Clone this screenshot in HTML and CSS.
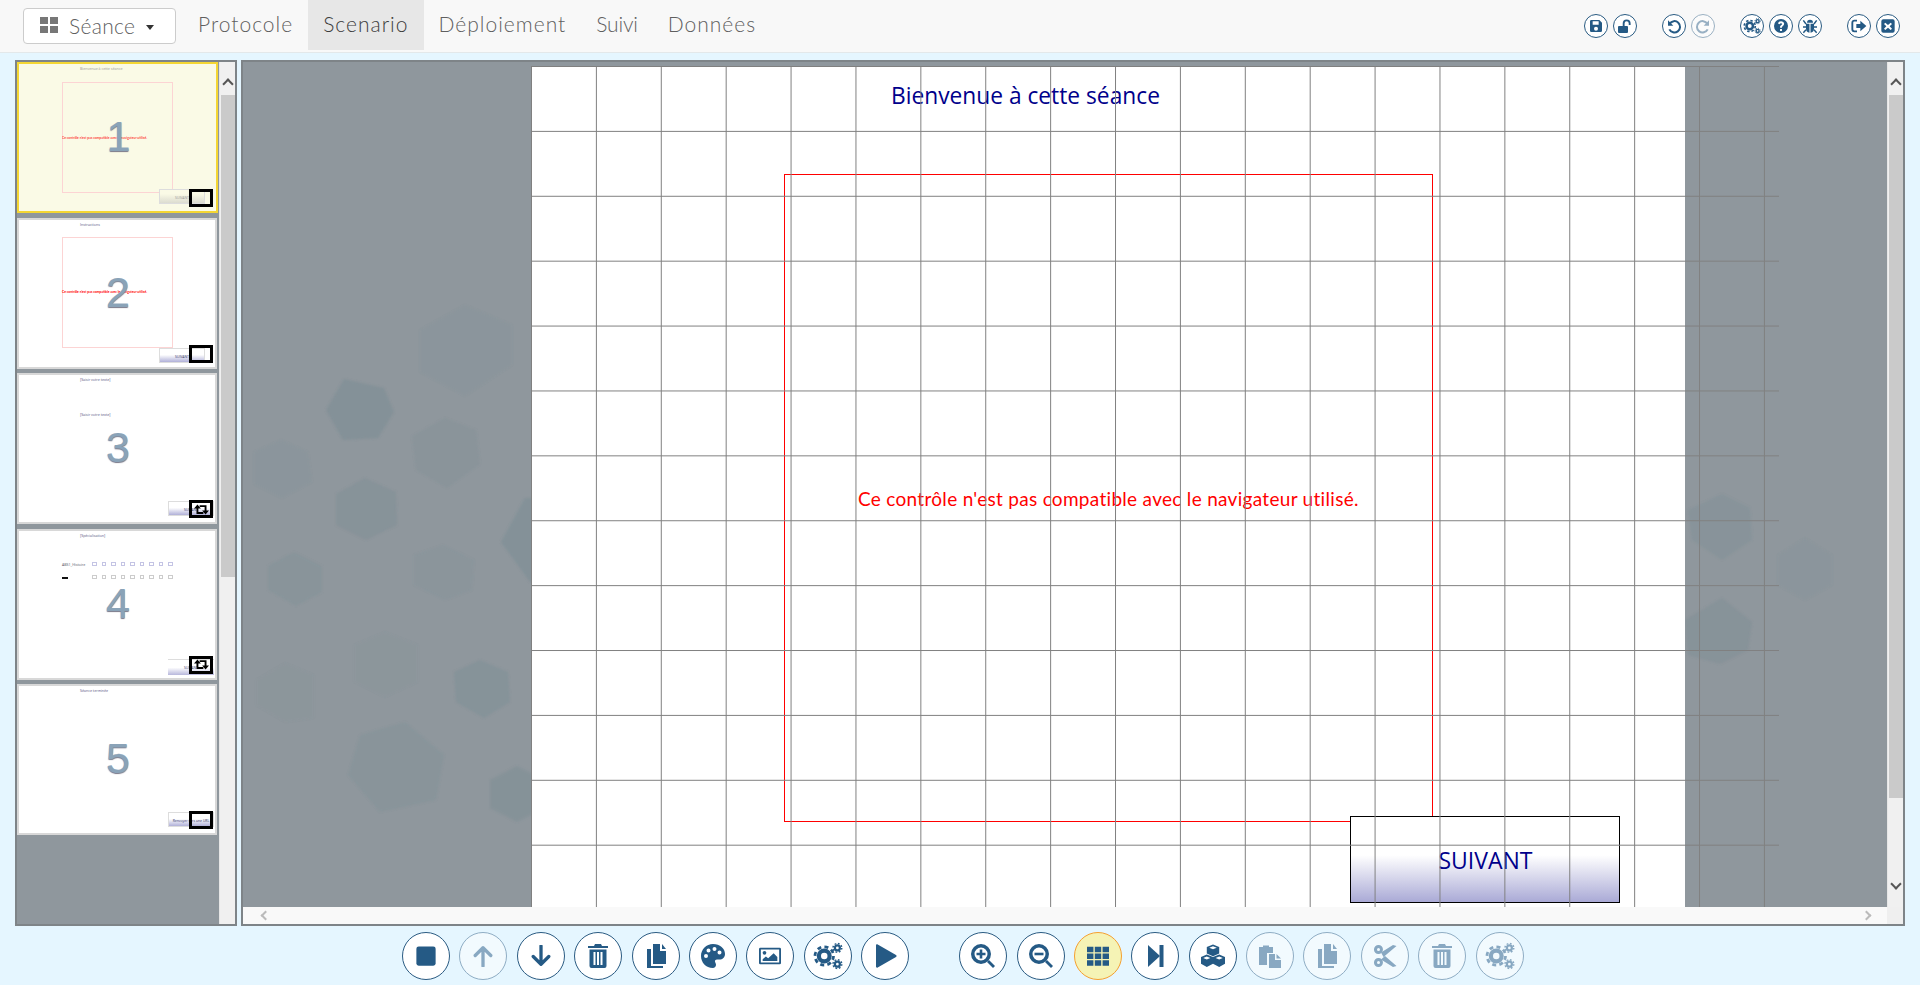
FILE: index.html
```html
<!DOCTYPE html>
<html lang="fr">
<head>
<meta charset="utf-8">
<title>Séance</title>
<link rel="stylesheet" href="styles.css">
</head>
<body>
<svg class="defs" width="0" height="0" aria-hidden="true">
  <defs>
    <symbol id="i-save" viewBox="0 0 24 24"><path d="M5 3h12l4 4v12a2 2 0 0 1-2 2H5a2 2 0 0 1-2-2V5a2 2 0 0 1 2-2zm2 2v5h9V5H7zm5 8a3 3 0 1 0 0 6 3 3 0 0 0 0-6z" fill-rule="evenodd"/></symbol>
    <symbol id="i-unlock" viewBox="0 0 24 24"><path d="M3 12h12a1.500 1.500 0 0 1 1.500 1.500V21a1.500 1.500 0 0 1-1.500 1.500H3A1.500 1.500 0 0 1 1.500 21v-7.500A1.500 1.500 0 0 1 3 12z"/><path d="M10 12V8a4.500 4.500 0 0 1 9 0v2.500" fill="none" stroke="currentColor" stroke-width="2.800"/></symbol>
    <symbol id="i-undo" viewBox="0 0 24 24"><path d="M5.500 8.500A8.500 8.500 0 1 1 5 17" fill="none" stroke="currentColor" stroke-width="3"/><path d="M3 3.500v8h8z"/></symbol>
    <symbol id="i-redo" viewBox="0 0 24 24"><path d="M18.500 8.500A8.500 8.500 0 1 0 19 17" fill="none" stroke="currentColor" stroke-width="3"/><path d="M21 3.500v8h-8z"/></symbol>
    <symbol id="i-cogs" viewBox="0 0 24 24"><circle cx="9" cy="12" r="4.300" fill="none" stroke="currentColor" stroke-width="3.400"/><circle cx="9" cy="12" r="7.400" fill="none" stroke="currentColor" stroke-width="2.200" stroke-dasharray="3.200 2.600"/><circle cx="19.500" cy="5.500" r="2" fill="none" stroke="currentColor" stroke-width="1.800"/><circle cx="19.500" cy="5.500" r="3.500" fill="none" stroke="currentColor" stroke-width="1.200" stroke-dasharray="1.400 1.350"/><circle cx="19.500" cy="18.500" r="2" fill="none" stroke="currentColor" stroke-width="1.800"/><circle cx="19.500" cy="18.500" r="3.500" fill="none" stroke="currentColor" stroke-width="1.200" stroke-dasharray="1.400 1.350"/></symbol>
    <symbol id="i-help" viewBox="0 0 24 24"><path fill-rule="evenodd" d="M12 1.500a10.500 10.500 0 1 1 0 21 10.500 10.500 0 0 1 0-21zM10.500 16.500v3h3v-3zM12 5C9.500 5 8 6.300 7.500 8.300l2.500 1c.3-1 1-1.600 2-1.600s1.600.5 1.600 1.200c0 1.500-3.100 1.900-3.100 4.600v1h3v-.6c0-1.700 3.200-2.200 3.200-5.200C16.700 6.500 14.500 5 12 5z"/></symbol>
    <symbol id="i-bug" viewBox="0 0 24 24"><path d="M7.500 7a4.500 4.500 0 0 1 9 0z"/><path d="M6 8.500h5.200V22C8 21.500 6 19 6 16zM12.800 8.500H18V16c0 3-2 5.500-5.200 6z"/><path d="M2 3.500l4 5.500M22 3.500l-4 5.500M1.500 13.500H6M22.500 13.500H18M2 22l4-4.500M22 22l-4-4.500" fill="none" stroke="currentColor" stroke-width="2.200"/></symbol>
    <symbol id="i-exit" viewBox="0 0 24 24"><path d="M9 4H5a3 3 0 0 0-3 3v10a3 3 0 0 0 3 3h4" fill="none" stroke="currentColor" stroke-width="2.800"/><path d="M8 9h6V4l9 8-9 8v-5H8z"/></symbol>
    <symbol id="i-close" viewBox="0 0 24 24"><path fill-rule="evenodd" d="M5 2h14a3 3 0 0 1 3 3v14a3 3 0 0 1-3 3H5a3 3 0 0 1-3-3V5a3 3 0 0 1 3-3zm3 5L6 9l3.500 3.500L6 16l2 2 4-3.500 4 3.500 2-2-3.500-3.500L18 9l-2-2-4 3.500z"/></symbol>
    <symbol id="i-stop" viewBox="0 0 24 24"><rect x="1.500" y="1.500" width="21" height="21" rx="2.500"/></symbol>
    <symbol id="i-up" viewBox="0 0 24 24"><path d="M12 23V3M3.500 11.500L12 3l8.500 8.500" fill="none" stroke="currentColor" stroke-width="3.600" stroke-linejoin="round" stroke-linecap="round"/></symbol>
    <symbol id="i-down" viewBox="0 0 24 24"><path d="M12 1v20M3.500 12.500L12 21l8.500-8.500" fill="none" stroke="currentColor" stroke-width="3.600" stroke-linejoin="round" stroke-linecap="round"/></symbol>
    <symbol id="i-trash" viewBox="0 0 24 24"><path d="M9 0h6l1 2h6v2H2V2h6zM3.500 5.500h17V22a2 2 0 0 1-2 2h-13a2 2 0 0 1-2-2zM7.500 8v13h2V8zm3.500 0v13h2V8zm3.500 0v13h2V8z" fill-rule="evenodd"/></symbol>
    <symbol id="i-copy" viewBox="0 0 24 24"><path d="M9 0h7v7h6v13H9z"/><path d="M18 0l4 5h-4z"/><path d="M7 5v17h12v2H3V5z"/></symbol>
    <symbol id="i-palette" viewBox="0 0 24 24"><path fill-rule="evenodd" d="M12 0c7 0 12 4.500 12 10 0 3.500-2.500 5.500-5.500 5.500H16c-1.500 0-2.300 1-2 2.200.4 1.200 1 1.800 1 3.100 0 2-1.300 3.200-3.200 3.200C5 24 0 18.500 0 12S5.300 0 12 0zM5 10a2 2 0 1 0 0 4 2 2 0 0 0 0-4zm2.500-5.500a2 2 0 1 0 0 4 2 2 0 0 0 0-4zm6-1.500a2 2 0 1 0 0 4 2 2 0 0 0 0-4zm5 3.500a2 2 0 1 0 0 4 2 2 0 0 0 0-4z"/></symbol>
    <symbol id="i-image" viewBox="0 0 24 24"><path fill-rule="evenodd" d="M1.500 3h21A1.500 1.500 0 0 1 24 4.500v15a1.500 1.500 0 0 1-1.500 1.500h-21A1.500 1.500 0 0 1 0 19.500v-15A1.500 1.500 0 0 1 1.500 3zM2 5v14h20V5z"/><circle cx="6" cy="8.500" r="2"/><path d="M4 17.500v-2l3.500-3 2.500 2 6-5.500 4 4v4.500z"/></symbol>
    <symbol id="i-play" viewBox="0 0 24 24"><path d="M3 1.500c0-1 .8-1.500 1.700-1L23 11c.8.500.8 1.500 0 2L4.700 23.500c-.9.500-1.700 0-1.700-1z"/></symbol>
    <symbol id="i-zoomin" viewBox="0 0 24 24"><path fill-rule="evenodd" d="M10 0a10 10 0 1 1 0 20 10 10 0 0 1 0-20zm0 3.500a6.500 6.500 0 1 0 0 13 6.500 6.500 0 0 0 0-13z"/><path d="M8.700 5.500h2.600v3.200h3.200v2.600h-3.200v3.200H8.700v-3.200H5.500V8.700h3.200z"/><path d="M16 18l2-2 6 6-2 2z"/></symbol>
    <symbol id="i-zoomout" viewBox="0 0 24 24"><path fill-rule="evenodd" d="M10 0a10 10 0 1 1 0 20 10 10 0 0 1 0-20zm0 3.500a6.500 6.500 0 1 0 0 13 6.500 6.500 0 0 0 0-13z"/><path d="M5.500 8.700h9v2.600h-9z"/><path d="M16 18l2-2 6 6-2 2z"/></symbol>
    <symbol id="i-grid" viewBox="0 0 24 24"><path d="M0 2h7v6H0zM8.500 2h7v6h-7zM17 2h7v6h-7zM0 9.300h7v6H0zM8.500 9.300h7v6h-7zM17 9.300h7v6h-7zM0 16.600h7v6H0zM8.500 16.600h7v6h-7zM17 16.600h7v6h-7z"/></symbol>
    <symbol id="i-step" viewBox="0 0 24 24"><path d="M5 1l12 11L5 23z"/><rect x="16.500" y="1" width="4" height="22"/></symbol>
    <symbol id="i-cubes" viewBox="0 0 24 24"><path d="M12 .5l6.200 2.500v6.600L12 12.200 5.800 9.600V3z"/><path d="M5.800 10.500l6.200 2.500v6.800L5.800 23 0 19.800V13zM18.200 10.500L24 13v6.800L18.200 23 12 19.800V13z"/><path d="M12 2.300l3.800 1.500L12 5.300 8.200 3.800zM5.800 12.600l3.600 1.400-3.600 1.500L2.200 14zM18.200 12.600l3.600 1.400-3.600 1.500-3.600-1.500z" fill="#fff"/></symbol>
    <symbol id="i-paste" viewBox="0 0 24 24"><path d="M1 3h4V1.500h6V3h4v6H9v12H1z"/><path d="M11 10h6v6h6v8H11z"/><path d="M18.500 10l4.500 4.500h-4.500z"/></symbol>
    <symbol id="i-cut" viewBox="0 0 24 24"><path fill-rule="evenodd" d="M5.500 1a4.500 4.500 0 1 1-.1 9 4.500 4.500 0 0 1 .1-9zm0 3a1.500 1.500 0 1 0 0 3 1.500 1.500 0 0 0 0-3zM5.500 14a4.500 4.500 0 1 1-.1 9 4.500 4.500 0 0 1 .1-9zm0 3a1.500 1.500 0 1 0 0 3 1.500 1.500 0 0 0 0-3z"/><path d="M8 8.500L20 1l3.500 1L10.500 13zM8 15.500l4-3.500 11.500 10-3.500 1z"/></symbol>
    <symbol id="i-retweet" viewBox="0 0 24 16"><path d="M5.500 4v9.500H15M18.500 12V2.500H9" fill="none" stroke="currentColor" stroke-width="3"/><path d="M0 6.500L5.500 0 11 6.500zM13 9.500h11L18.500 16z"/></symbol>
  </defs>
</svg>

<header class="navbar">
  <button class="session-btn"><span class="session-grid"><i></i><i></i><i></i><i></i></span><span class="session-label">Séance</span><span class="caret"></span></button>
  <nav class="tabs">
    <a class="tab">Protocole</a>
    <a class="tab tab-active">Scenario</a>
    <a class="tab">Déploiement</a>
    <a class="tab tab-narrow">Suivi</a>
    <a class="tab">Données</a>
  </nav>
  <div class="top-tools">
    <div class="tool-group">
      <span class="mini"><svg><use href="#i-save"/></svg></span>
      <span class="mini"><svg><use href="#i-unlock"/></svg></span>
    </div>
    <div class="tool-group">
      <span class="mini"><svg><use href="#i-undo"/></svg></span>
      <span class="mini mini-off"><svg><use href="#i-redo"/></svg></span>
    </div>
    <div class="tool-group">
      <span class="mini mini-wide"><svg><use href="#i-cogs"/></svg></span>
      <span class="mini"><svg><use href="#i-help"/></svg></span>
      <span class="mini"><svg><use href="#i-bug"/></svg></span>
    </div>
    <div class="tool-group">
      <span class="mini"><svg><use href="#i-exit"/></svg></span>
      <span class="mini"><svg><use href="#i-close"/></svg></span>
    </div>
  </div>
</header>

<main class="workspace">
  <aside class="side-panel">
    <div class="thumb-list">
      <article class="thumb thumb-selected">
        <div class="t-title t-faded">Bienvenue à cette séance</div>
        <div class="t-frame t-frame-a"></div>
        <div class="t-warning t-warning-a">Ce contrôle n'est pas compatible avec le navigateur utilisé.</div>
        <div class="t-next t-next-a">SUIVANT</div>
        <div class="t-num">1</div>
        <div class="t-badge"></div>
      </article>
      <article class="thumb">
        <div class="t-title">Instructions</div>
        <div class="t-frame t-frame-b"></div>
        <div class="t-warning t-warning-b">Ce contrôle n'est pas compatible avec le navigateur utilisé.</div>
        <div class="t-next t-next-b">SUIVANT</div>
        <div class="t-num">2</div>
        <div class="t-badge"></div>
      </article>
      <article class="thumb">
        <div class="t-title">[Saisir votre texte]</div>
        <div class="t-title t-title-2">[Saisir votre texte]</div>
        <div class="t-next t-next-c">SUIVANT</div>
        <div class="t-num">3</div>
        <div class="t-badge"><svg><use href="#i-retweet"/></svg></div>
      </article>
      <article class="thumb">
        <div class="t-title">[Spécialisation]</div>
        <div class="t-row-label">ABS1_Histoire</div>
        <div class="t-row-mark"></div>
        <div class="t-checks t-checks-a"><i></i><i></i><i></i><i></i><i></i><i></i><i></i><i></i><i></i></div>
        <div class="t-checks t-checks-b"><i></i><i></i><i></i><i></i><i></i><i></i><i></i><i></i><i></i></div>
        <div class="t-next t-next-d">SUIVANT</div>
        <div class="t-num">4</div>
        <div class="t-badge"><svg><use href="#i-retweet"/></svg></div>
      </article>
      <article class="thumb">
        <div class="t-title">Séance terminée</div>
        <div class="t-next t-next-c">Renvoyer vers une URL</div>
        <div class="t-num">5</div>
        <div class="t-badge"></div>
      </article>
    </div>
    <div class="vscroll">
      <span class="chev chev-up"></span>
      <span class="vthumb vthumb-side"></span>
    </div>
  </aside>

  <section class="stage-panel">
    <div class="stage-row">
      <div class="stage">
        <svg class="hexes" width="1644" height="847" viewBox="243 62 1644 847" aria-hidden="true">
          <defs><filter id="soft"><feGaussianBlur stdDeviation="1.100"/></filter></defs>
          <g filter="url(#soft)" fill="#6f8890">
            <polygon opacity=".34" points="344,379 384,388 394,412 378,438 343,440 326,410"/>
            <polygon opacity=".16" points="445,418 476,430 480,464 447,488 416,470 412,436"/>
            <polygon opacity=".1" points="281,440 308,452 312,482 282,498 254,484 254,452"/>
            <polygon opacity=".26" points="365,478 396,492 397,525 366,540 336,525 336,494"/>
            <polygon opacity=".1" points="465,305 512,325 512,365 465,396 420,372 420,330"/>
            <polygon opacity=".18" points="294,552 322,566 322,592 296,606 268,590 268,566"/>
            <polygon opacity=".12" points="443,545 474,560 472,590 445,600 414,585 414,555"/>
            <polygon opacity=".36" points="525,498 570,498 572,590 530,582 501,542"/>
            <polygon opacity=".28" points="535,398 570,398 570,445 535,445 536,420"/>
            <polygon opacity=".07" points="385,632 418,645 418,682 385,697 354,682 354,645"/>
            <polygon opacity=".07" points="285,663 314,675 314,718 285,722 256,705 256,680"/>
            <polygon opacity=".28" points="480,660 508,672 510,702 484,718 456,702 454,672"/>
            <polygon opacity=".18" points="405,722 444,755 436,800 380,812 348,775 360,735"/>
            <polygon opacity=".3" points="517,766 545,780 545,808 517,822 490,808 490,780"/>
            <polygon opacity=".22" points="1722,494 1750,508 1752,540 1722,560 1692,540 1688,510"/>
            <polygon opacity=".1" points="1805,538 1832,555 1832,585 1805,600 1778,585 1778,555"/>
            <polygon opacity=".26" points="1722,598 1752,622 1748,650 1720,664 1688,655 1685,620"/>
          </g>
        </svg>
        <div class="slide"></div>
        <div class="slide-title">Bienvenue à cette séance</div>
        <div class="slide-frame"></div>
        <div class="slide-warning">Ce contrôle n'est pas compatible avec le navigateur utilisé.</div>
        <div class="slide-next">SUIVANT</div>
        <div class="slide-grid"></div>
      </div>
      <div class="vscroll vscroll-main">
        <span class="chev chev-up"></span>
        <span class="vthumb vthumb-main"></span>
        <span class="chev chev-down"></span>
      </div>
    </div>
    <div class="hscroll">
      <div class="hscroll-track">
        <span class="hchev hchev-left"></span>
        <span class="hchev hchev-right"></span>
      </div>
      <div class="hscroll-corner"></div>
    </div>
  </section>
</main>

<footer class="toolbar">
  <div class="round-group">
    <span class="round"><svg><use href="#i-stop"/></svg></span>
    <span class="round round-off"><svg><use href="#i-up"/></svg></span>
    <span class="round"><svg><use href="#i-down"/></svg></span>
    <span class="round round-tall"><svg><use href="#i-trash"/></svg></span>
    <span class="round round-tall"><svg><use href="#i-copy"/></svg></span>
    <span class="round round-tall"><svg><use href="#i-palette"/></svg></span>
    <span class="round"><svg><use href="#i-image"/></svg></span>
    <span class="round round-wide"><svg><use href="#i-cogs"/></svg></span>
    <span class="round round-tall"><svg><use href="#i-play"/></svg></span>
  </div>
  <div class="round-group">
    <span class="round round-tall"><svg><use href="#i-zoomin"/></svg></span>
    <span class="round round-tall"><svg><use href="#i-zoomout"/></svg></span>
    <span class="round round-on"><svg><use href="#i-grid"/></svg></span>
    <span class="round round-tall"><svg><use href="#i-step"/></svg></span>
    <span class="round round-tall"><svg><use href="#i-cubes"/></svg></span>
    <span class="round round-off round-tall"><svg><use href="#i-paste"/></svg></span>
    <span class="round round-off round-tall"><svg><use href="#i-copy"/></svg></span>
    <span class="round round-off round-tall"><svg><use href="#i-cut"/></svg></span>
    <span class="round round-off round-tall"><svg><use href="#i-trash"/></svg></span>
    <span class="round round-off round-wide"><svg><use href="#i-cogs"/></svg></span>
  </div>
</footer>
</body>
</html>
```

FILE: styles.css
```css
* { box-sizing: border-box; }
html, body { margin: 0; height: 985px; overflow: hidden; }
body {
  display: flex;
  flex-direction: column;
  background: #e5f6ff;
  font-family: Lato, "Open Sans", sans-serif;
  color: #777;
}
.defs { position: absolute; }

/* top bar */
.navbar {
  height: 53px;
  flex: none;
  display: flex;
  align-items: flex-start;
  background: #f8f8f8;
  border-bottom: 1px solid #e3e8ea;
  padding-left: 23px;
}
.session-btn {
  width: 153px;
  height: 36px;
  margin-top: 8px;
  display: flex;
  align-items: center;
  padding: 0 0 2px 16px;
  background: #fff;
  border: 1px solid #ccc;
  border-radius: 4px;
  font: inherit;
  font-weight: 300;
  font-size: 21px;
  letter-spacing: .3px;
  color: #5f5f5f;
}
.session-grid {
  width: 18px;
  height: 16px;
  display: grid;
  grid-template-columns: 8px 8px;
  grid-template-rows: 7px 7px;
  gap: 2px;
}
.session-grid i { background: #777; }
.session-label { margin-left: 11px; }
.caret {
  margin-left: 11px;
  margin-top: 5px;
  border-top: 5px solid #333;
  border-left: 4px solid transparent;
  border-right: 4px solid transparent;
}
.tabs { display: flex; margin-left: 7px; }
.tab {
  height: 50px;
  padding: 0 15px 3px;
  display: flex;
  align-items: center;
  font-size: 21px;
  font-weight: 300;
  letter-spacing: 1px;
  color: #5f5f5f;
}
.tab-narrow { letter-spacing: -.2px; }
.tab-active { background: #e7e7e7; color: #3c3c3c; }

.top-tools {
  margin-left: auto;
  margin-right: 20px;
  margin-top: 14px;
  display: flex;
  gap: 25px;
}
.tool-group { display: flex; gap: 5px; }
.mini {
  width: 24px;
  height: 24px;
  display: flex;
  align-items: center;
  justify-content: center;
  border: 1px solid #2a5b82;
  border-radius: 50%;
  background: #fff;
  color: #255a85;
}
.mini svg { width: 16px; height: 16px; fill: currentColor; }
.mini-wide svg { width: 18px; height: 18px; }
.mini-off { opacity: .45; }

/* workspace */
.workspace {
  height: 873px;
  flex: none;
  display: flex;
  gap: 4px;
  padding: 7px 15px 0;
}
.side-panel {
  width: 222px;
  flex: none;
  display: flex;
  border: 2px solid #7e8488;
  background: #8f979d;
}
.thumb-list {
  width: 202px;
  flex: none;
  display: flex;
  flex-direction: column;
  gap: 4.500px;
  overflow: hidden;
}
.thumb {
  position: relative;
  flex: none;
  width: 200px;
  height: 151px;
  background: #fff;
  border: 2px solid #d8d8d8;
  overflow: hidden;
}
.thumb-selected { width: 201px; background: #fafae6; border-color: #f4d633; }
.t-title {
  position: absolute;
  left: 61px;
  top: 2px;
  font: 3.600px "Open Sans", sans-serif;
  white-space: nowrap;
  color: #55557f;
}
.t-faded { color: #999; }
.t-title-2 { top: 37px; }
.t-frame { position: absolute; left: 43px; width: 111px; height: 111px; border: 1px solid #fcd4d4; }
.t-frame-a { top: 18px; }
.t-frame-b { top: 17px; }
.t-warning {
  position: absolute;
  left: 43px;
  font: 700 3.300px Lato, sans-serif;
  color: #f00;
  white-space: nowrap;
}
.t-warning-a { top: 72px; opacity: .75; }
.t-warning-b { top: 70px; }
.t-next {
  position: absolute;
  left: 149px;
  top: 126px;
  width: 46px;
  height: 15px;
  border: 1px solid #ddd;
  background: linear-gradient(#fff 45%, #b0b0d8);
  font: 3.400px "Open Sans", sans-serif;
  color: #336;
  text-align: center;
  line-height: 15px;
  white-space: nowrap;
  overflow: hidden;
}
.t-next-a { left: 140px; top: 125px; background: linear-gradient(#fafae6 30%, #dcdcd0); color: #999; }
.t-next-b { left: 140px; top: 128px; }
.t-next-d { top: 128px; height: 16px; border-width: 0; border-top: 1px solid #ddd; background: linear-gradient(#fff 50%, #b8b8dc); }
.t-num {
  position: absolute;
  left: 0;
  right: 0;
  top: 47px;
  padding-left: 2px;
  text-align: center;
  font: 43px/50px "Liberation Sans", sans-serif;
  color: #8aa3b8;
  -webkit-text-stroke: .2px #8aa3b8;
  text-shadow: 0 1px 1px #778;
}
.t-badge {
  position: absolute;
  left: 170px;
  top: 125px;
  width: 24px;
  height: 18px;
  border: 3px solid #000;
  display: flex;
  align-items: center;
  justify-content: center;
}
.t-badge svg { width: 15px; height: 11px; fill: #000; color: #000; }
.t-row-label {
  position: absolute;
  left: 43px;
  top: 31px;
  font: 3.600px "Open Sans", sans-serif;
  color: #556;
  white-space: nowrap;
}
.t-row-mark { position: absolute; left: 43px; top: 46px; width: 6px; height: 2px; background: #111; }
.t-checks { position: absolute; left: 73px; display: flex; gap: 5px; }
.t-checks i { width: 4.500px; height: 4.500px; border: 1px solid #c4c4e4; }
.t-checks-a { top: 31px; }
.t-checks-b { top: 44px; }
.t-checks-b i { border-color: #ccc; }

/* scrollbars */
.vscroll {
  width: 16px;
  flex: none;
  position: relative;
  background: #f0f0f0;
  border-left: 1px solid #e6e6e6;
}
.vthumb { position: absolute; left: 1px; width: 14px; background: #cacaca; }
.vthumb-side { top: 33px; height: 482px; }
.vthumb-main { top: 33px; height: 703px; }
.chev {
  position: absolute;
  left: 4px;
  width: 8px;
  height: 8px;
  border-left: 2.500px solid #555;
  border-top: 2.500px solid #555;
  transform: rotate(45deg);
}
.chev-up { top: 18px; }
.chev-down { bottom: 19px; transform: rotate(225deg); }

.stage-panel {
  flex: 1;
  display: flex;
  flex-direction: column;
  border: 2px solid #7e8488;
  min-width: 0;
}
.stage-row { flex: 1; display: flex; min-height: 0; }
.stage {
  position: relative;
  flex: 1;
  overflow: hidden;
  background: #8f979d;
}
.hexes { position: absolute; left: 0; top: 0; }
.slide { position: absolute; left: 288px; top: 4px; width: 1154px; height: 850px; background: #fff; }
.slide-title {
  position: absolute;
  left: 648px;
  top: 18px;
  font: 22.750px/32px "Open Sans", sans-serif;
  color: #00008b;
  white-space: nowrap;
}
.slide-frame { position: absolute; left: 541px; top: 112px; width: 649px; height: 648px; border: 1px solid #f00; }
.slide-warning {
  position: absolute;
  left: 615px;
  top: 426px;
  font: 19px/22px Lato, sans-serif;
  letter-spacing: .3px;
  color: #f00;
  white-space: nowrap;
}
.slide-next {
  position: absolute;
  left: 1107px;
  top: 754px;
  width: 270px;
  height: 87px;
  padding: 27px 0 0 1px;
  border: 1.500px solid #000;
  background: linear-gradient(#fff 45%, #aaaad6);
  font: 23px/32px "Open Sans", sans-serif;
  color: #00008b;
  text-align: center;
}
.slide-grid {
  position: absolute;
  left: 288px;
  top: 4px;
  width: 1248px;
  height: 844px;
  background-image:
    linear-gradient(#808080 1px, transparent 1px),
    linear-gradient(90deg, #808080 1px, transparent 1px);
  background-size: 64.900px 64.900px;
}
.hscroll { height: 17px; flex: none; display: flex; }
.hscroll-track { flex: 1; position: relative; background: #f9f9f9; }
.hscroll-corner { width: 16px; background: #efefef; }
.hchev {
  position: absolute;
  top: 5px;
  width: 7px;
  height: 7px;
  border-left: 2px solid #bbb;
  border-top: 2px solid #bbb;
}
.hchev-left { left: 19px; transform: rotate(-45deg); }
.hchev-right { right: 17px; transform: rotate(135deg); }

/* bottom bar */
.toolbar {
  flex: 1;
  display: flex;
  gap: 50px;
  padding: 6px 0 0 402px;
}
.round-group { display: flex; gap: 9.400px; }
.round {
  width: 48px;
  height: 48px;
  display: flex;
  align-items: center;
  justify-content: center;
  background: #fff;
  border: 1.500px solid #2a5b82;
  border-radius: 50%;
  color: #255a85;
}
.round svg { width: 22px; height: 22px; fill: currentColor; }
.round-tall svg { width: 24px; height: 24px; }
.round-wide svg { width: 30px; height: 30px; }
.round-off { background: #f2fafe; border-color: #8fadc4; color: #88a8c2; }
.round-on { background: #f5f3b5; border-color: #f5a030; }
```
